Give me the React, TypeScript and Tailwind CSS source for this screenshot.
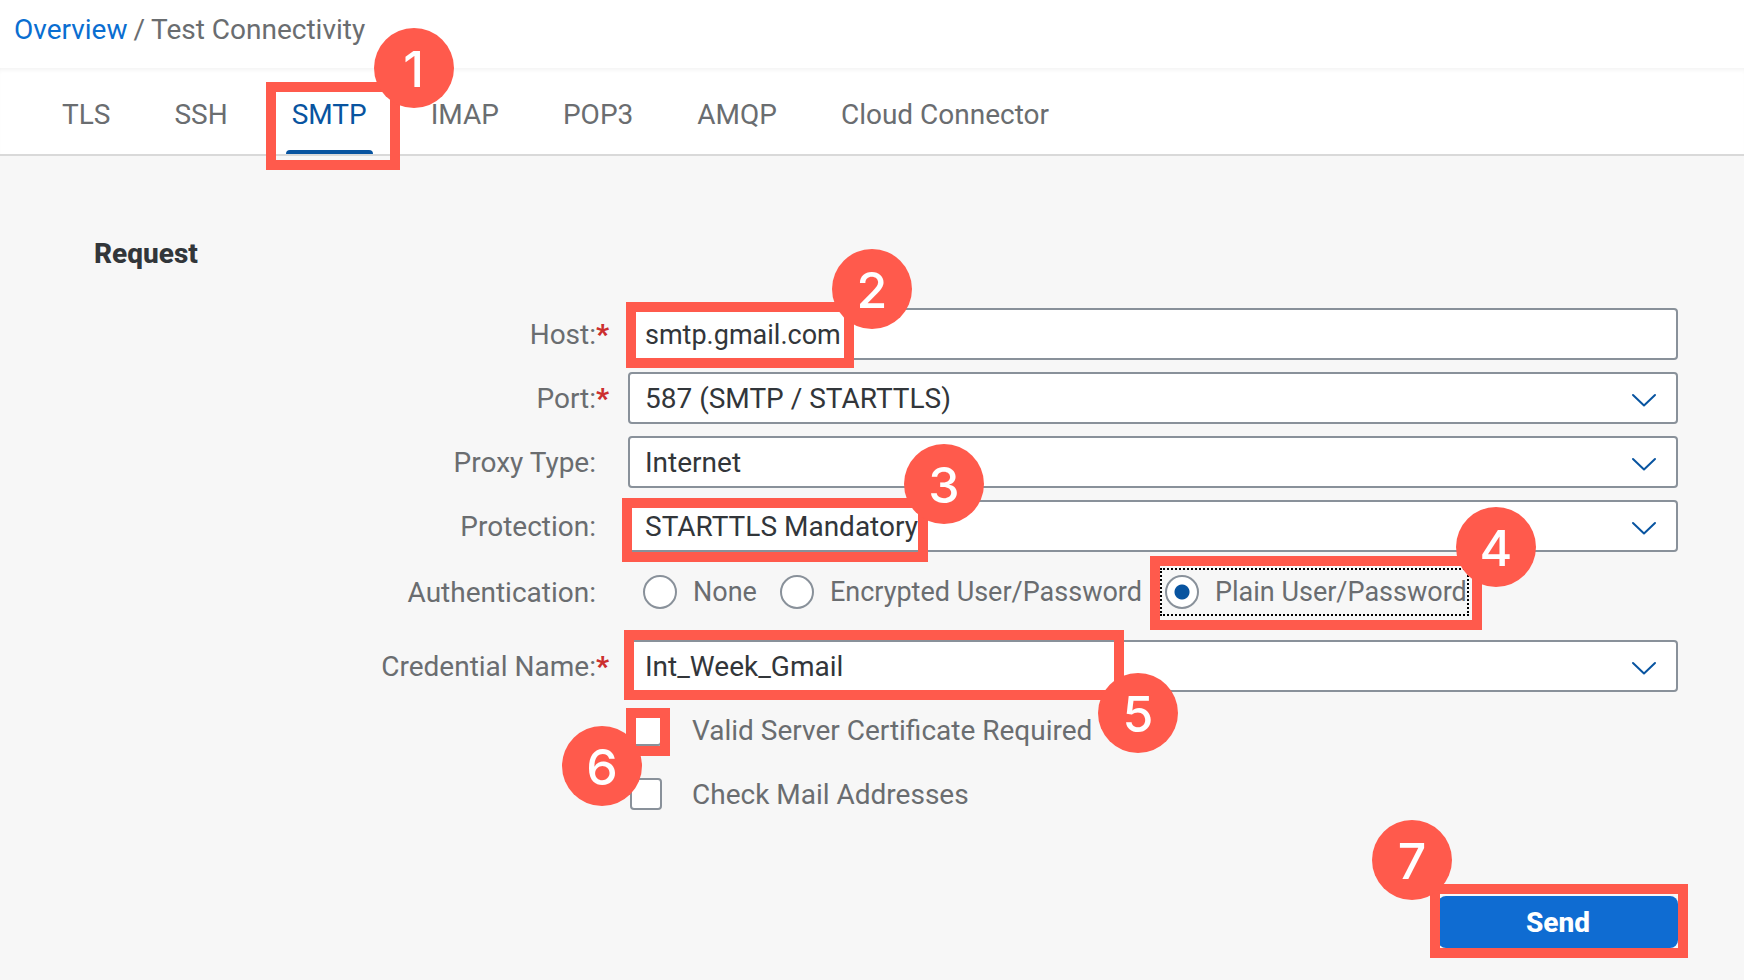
import { useState } from "react";
import type { ReactNode } from "react";

const CONTROL =
  "block h-[52px] w-full appearance-none rounded-[4px] border-2 border-[#89919a] bg-white pt-0.5 pl-[15px] text-[#32363a] outline-none";

/** Numbered marker: a frame round the part it belongs to, and a disc with the step number. */
function Callout({ step, frame, disc }: { step: number; frame: string; disc: string }) {
  return (
    <>
      <span aria-hidden="true" className={`pointer-events-none absolute z-10 border-10 border-[#ff5a4c] ${frame}`} />
      <span
        className={`pointer-events-none absolute z-20 flex size-20 items-center justify-center rounded-full bg-[#ff5a4c] pt-0.5 font-[Inter,sans-serif] text-[50px] leading-none font-medium text-white ${disc}`}
      >
        {step}
      </span>
    </>
  );
}

function FormRow({
  label,
  htmlFor,
  required,
  children,
}: {
  label?: string;
  htmlFor?: string;
  required?: boolean;
  children: ReactNode;
}) {
  return (
    <div className="grid grid-cols-[612fr_1050fr] items-center gap-4">
      <div className="flex justify-end pt-0.5 text-[#6a6d70]">
        {label && <label htmlFor={htmlFor}>{label}:</label>}
        <span aria-hidden="true" className="w-4 font-black text-[#cc2f2f]">
          {required ? "*" : ""}
        </span>
      </div>
      <div className="relative">{children}</div>
    </div>
  );
}

function Dropdown({ id, options }: { id: string; options: string[] }) {
  return (
    <div className="relative">
      <select id={id} className={`${CONTROL} text-[28px]`}>
        {options.map((option) => (
          <option key={option}>{option}</option>
        ))}
      </select>
      <svg
        viewBox="0 0 28 16"
        className="pointer-events-none absolute top-5 right-5 h-4 w-7 fill-none stroke-[#0854a0] stroke-2"
        strokeLinecap="round"
        strokeLinejoin="round"
        aria-hidden="true"
      >
        <path d="M3 3 L14 13.5 L25 3" />
      </svg>
    </div>
  );
}

const TABS = ["TLS", "SSH", "SMTP", "IMAP", "POP3", "AMQP", "Cloud Connector"];
const AUTH_OPTIONS = ["None", "Encrypted User/Password", "Plain User/Password"];

export default function App() {
  const [tab, setTab] = useState("SMTP");
  const [host, setHost] = useState("smtp.gmail.com");
  const [auth, setAuth] = useState("Plain User/Password");

  return (
    <div className="min-h-screen bg-[#f7f7f7] font-[Roboto,sans-serif] text-[28px] leading-9">
      <header className="bg-white">
        <nav aria-label="Breadcrumb" className="flex h-[68px] items-start gap-1.5 px-3.5 pt-3 text-[#6a6d70]">
          <a href="#overview" className="text-[#0a6ed1]">
            Overview
          </a>
          <span>/</span>
          <span>Test Connectivity</span>
        </nav>
        <div
          role="tablist"
          className="flex h-[88px] gap-16 border-b-2 border-[#d9d9d9] px-[62px] shadow-[inset_0_4px_4px_-2px_#0000000d]"
        >
          {TABS.map((name) => (
            <div key={name} className="relative">
              <button
                role="tab"
                aria-selected={tab === name}
                onClick={() => setTab(name)}
                className={`relative h-full pt-2 ${tab === name ? "text-[#0854a0]" : "text-[#6a6d70]"}`}
              >
                {name}
                {tab === name && (
                  <span className="absolute -inset-x-1.5 bottom-0 h-1 rounded-t bg-[#0854a0]" />
                )}
              </button>
              {name === "SMTP" && (
                <Callout step={1} frame="top-3.5 -left-[26px] h-[88px] w-[134px]" disc="-top-10 left-[82px]" />
              )}
            </div>
          ))}
        </div>
      </header>

      <main className="pt-20 pr-[66px] pb-8">
        <h1 className="pl-[94px] text-[28px] leading-9 font-extrabold text-[#32363a]">Request</h1>

        <form className="mt-9 flex flex-col" onSubmit={(event) => event.preventDefault()}>
          <div className="flex flex-col gap-3">
            <FormRow label="Host" htmlFor="host" required>
              <input
                id="host"
                required
                value={host}
                onChange={(event) => setHost(event.target.value)}
                className={`${CONTROL} text-[27px]`}
              />
              <Callout step={2} frame="-top-1.5 -left-0.5 h-[66px] w-[228px]" disc="-top-[59px] left-[204px]" />
            </FormRow>
            <FormRow label="Port" htmlFor="port" required>
              <Dropdown id="port" options={["587 (SMTP / STARTTLS)", "465 (SMTPS)", "25 (SMTP)"]} />
            </FormRow>
            <FormRow label="Proxy Type" htmlFor="proxy">
              <Dropdown id="proxy" options={["Internet", "On-Premise"]} />
            </FormRow>
            <FormRow label="Protection" htmlFor="protection">
              <Dropdown id="protection" options={["STARTTLS Mandatory", "STARTTLS Optional", "Off"]} />
              <Callout step={3} frame="-top-0.5 -left-1.5 h-16 w-[306px]" disc="-top-14 left-[276px]" />
            </FormRow>
          </div>

          <div className="pt-1 pb-3">
            <FormRow label="Authentication">
              <div
                role="radiogroup"
                aria-label="Authentication"
                className="flex h-[72px] items-center gap-5 pl-3 text-[27px]"
              >
                {AUTH_OPTIONS.map((option) => (
                  <div key={option} className="relative">
                    <label
                      className={`flex h-11 items-center gap-4 whitespace-nowrap text-[#6a6d70] ${
                        auth === option ? "outline-2 outline-black outline-dotted" : ""
                      }`}
                    >
                      <input
                        type="radio"
                        name="auth"
                        checked={auth === option}
                        onChange={() => setAuth(option)}
                        className="ml-[3px] size-[34px] shrink-0 appearance-none rounded-full border-2 border-[#89919a] bg-white outline-none checked:bg-[radial-gradient(circle,#0854a0_7px,white_8px)]"
                      />
                      {option}
                    </label>
                    {option === "Plain User/Password" && (
                      <Callout step={4} frame="-top-3.5 -left-3 h-[74px] w-[332px]" disc="-top-[63px] left-[294px]" />
                    )}
                  </div>
                ))}
              </div>
            </FormRow>
          </div>

          <FormRow label="Credential Name" htmlFor="credential" required>
            <Dropdown id="credential" options={["Int_Week_Gmail"]} />
            <Callout step={5} frame="-top-2.5 -left-1 h-[70px] w-[500px]" disc="top-[33px] left-[470px]" />
          </FormRow>

          <div className="mt-3 flex flex-col gap-3">
            <FormRow>
              <label className="flex h-[52px] items-center gap-[30px] pl-0.5 text-[#6a6d70]">
                <input
                  type="checkbox"
                  className="size-8 shrink-0 appearance-none rounded-[4px] border-2 border-[#89919a] bg-white"
                />
                <span className="pt-0.5">Valid Server Certificate Required</span>
              </label>
              <Callout step={6} frame="top-1 -left-0.5 h-12 w-11" disc="top-[22px] -left-[66px]" />
            </FormRow>
            <FormRow>
              <label className="flex h-[52px] items-center gap-[30px] pl-0.5 text-[#6a6d70]">
                <input
                  type="checkbox"
                  className="size-8 shrink-0 appearance-none rounded-[4px] border-2 border-[#89919a] bg-white"
                />
                <span className="pt-0.5">Check Mail Addresses</span>
              </label>
            </FormRow>
          </div>

          <div className="relative mt-[76px] self-end">
            <button type="submit" className="block h-[52px] w-60 rounded-lg bg-[#0f6cd2] pt-0.5 font-extrabold text-white">
              Send
            </button>
            <Callout step={7} frame="-top-3 -left-2 h-[74px] w-[258px]" disc="-top-[76px] -left-[66px]" />
          </div>
        </form>
      </main>
    </div>
  );
}
